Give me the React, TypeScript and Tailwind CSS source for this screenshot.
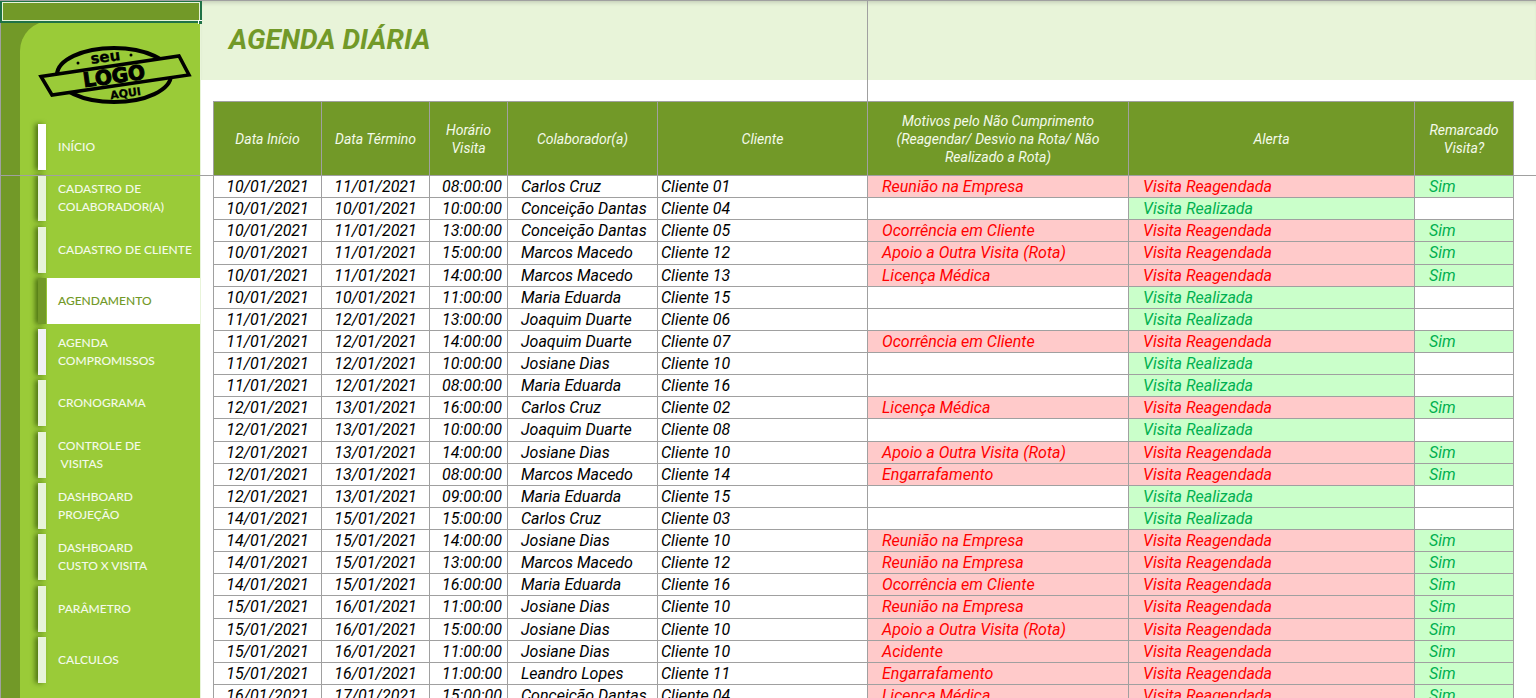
import React from "react";
import clsx from "clsx";

const menu = [
  { label: "INÍCIO", bar: "bg-white" },
  { label: "CADASTRO DE\nCOLABORADOR(A)", bar: "bg-[#e8f4d9]" },
  { label: "CADASTRO DE CLIENTE", bar: "bg-[#e8f4d9]" },
  { label: "AGENDAMENTO", bar: "bg-[#729928]", active: true },
  { label: "AGENDA\nCOMPROMISSOS", bar: "bg-[#f1f1f5]" },
  { label: "CRONOGRAMA", bar: "bg-[#e8f4d9]" },
  { label: "CONTROLE DE\n VISITAS", bar: "bg-[#e8f4d9]" },
  { label: "DASHBOARD\nPROJEÇÃO", bar: "bg-[#e8f4d9]" },
  { label: "DASHBOARD\nCUSTO X VISITA", bar: "bg-[#e8f4d9]" },
  { label: "PARÂMETRO", bar: "bg-[#e8f4d9]" },
  { label: "CALCULOS", bar: "bg-[#e8f4d9]" },
];

const columns = [
  { label: "Data Início", width: "w-[108px]" },
  { label: "Data Término", width: "w-[108px]" },
  { label: "Horário\nVisita", width: "w-[78px]" },
  { label: "Colaborador(a)", width: "w-[150px]" },
  { label: "Cliente", width: "w-[210px]" },
  {
    label:
      "Motivos pelo Não Cumprimento\n(Reagendar/ Desvio na Rota/ Não\nRealizado a Rota)",
    width: "w-[261px]",
  },
  { label: "Alerta", width: "w-[286px]" },
  { label: "Remarcado\nVisita?", width: "w-[99px]" },
];

// início, término, horário, colaborador, cliente, motivo (vazio = visita realizada)
const visits = [
  ["10/01/2021", "11/01/2021", "08:00:00", "Carlos Cruz", "Cliente 01", "Reunião na Empresa"],
  ["10/01/2021", "10/01/2021", "10:00:00", "Conceição Dantas", "Cliente 04", ""],
  ["10/01/2021", "11/01/2021", "13:00:00", "Conceição Dantas", "Cliente 05", "Ocorrência em Cliente"],
  ["10/01/2021", "11/01/2021", "15:00:00", "Marcos Macedo", "Cliente 12", "Apoio a Outra Visita (Rota)"],
  ["10/01/2021", "11/01/2021", "14:00:00", "Marcos Macedo", "Cliente 13", "Licença Médica"],
  ["10/01/2021", "10/01/2021", "11:00:00", "Maria Eduarda", "Cliente 15", ""],
  ["11/01/2021", "12/01/2021", "13:00:00", "Joaquim Duarte", "Cliente 06", ""],
  ["11/01/2021", "12/01/2021", "14:00:00", "Joaquim Duarte", "Cliente 07", "Ocorrência em Cliente"],
  ["11/01/2021", "12/01/2021", "10:00:00", "Josiane Dias", "Cliente 10", ""],
  ["11/01/2021", "12/01/2021", "08:00:00", "Maria Eduarda", "Cliente 16", ""],
  ["12/01/2021", "13/01/2021", "16:00:00", "Carlos Cruz", "Cliente 02", "Licença Médica"],
  ["12/01/2021", "13/01/2021", "10:00:00", "Joaquim Duarte", "Cliente 08", ""],
  ["12/01/2021", "13/01/2021", "14:00:00", "Josiane Dias", "Cliente 10", "Apoio a Outra Visita (Rota)"],
  ["12/01/2021", "13/01/2021", "08:00:00", "Marcos Macedo", "Cliente 14", "Engarrafamento"],
  ["12/01/2021", "13/01/2021", "09:00:00", "Maria Eduarda", "Cliente 15", ""],
  ["14/01/2021", "15/01/2021", "15:00:00", "Carlos Cruz", "Cliente 03", ""],
  ["14/01/2021", "15/01/2021", "14:00:00", "Josiane Dias", "Cliente 10", "Reunião na Empresa"],
  ["14/01/2021", "15/01/2021", "13:00:00", "Marcos Macedo", "Cliente 12", "Reunião na Empresa"],
  ["14/01/2021", "15/01/2021", "16:00:00", "Maria Eduarda", "Cliente 16", "Ocorrência em Cliente"],
  ["15/01/2021", "16/01/2021", "11:00:00", "Josiane Dias", "Cliente 10", "Reunião na Empresa"],
  ["15/01/2021", "16/01/2021", "15:00:00", "Josiane Dias", "Cliente 10", "Apoio a Outra Visita (Rota)"],
  ["15/01/2021", "16/01/2021", "11:00:00", "Josiane Dias", "Cliente 10", "Acidente"],
  ["15/01/2021", "16/01/2021", "11:00:00", "Leandro Lopes", "Cliente 11", "Engarrafamento"],
  ["16/01/2021", "17/01/2021", "15:00:00", "Conceição Dantas", "Cliente 04", "Licença Médica"],
];

function Logo() {
  return (
    <svg
      width="156"
      height="62"
      viewBox="0 0 156 62"
      className="ml-[17px] mt-[22px]"
      role="img"
      aria-label="Seu logo aqui"
    >
      <ellipse cx="77" cy="31" rx="57" ry="27" fill="none" stroke="#000" strokeWidth="4" />
      <path
        d="M4 32.5 L142 12 L152 31 L15 51 Z"
        fill="#9acb38"
        stroke="#000"
        strokeWidth="3.5"
      />
      <g
        fill="#000"
        stroke="#000"
        textAnchor="middle"
        className="font-['DejaVu_Sans'] font-bold"
      >
        <text x="69" y="18" fontSize="15" strokeWidth="0.3" transform="rotate(-8 69 18)">
          seu
        </text>
        <text x="78" y="39" fontSize="20" strokeWidth="1" transform="rotate(-8 78 39)">
          LOGO
        </text>
        <text x="89" y="53" fontSize="11" strokeWidth="0.3" transform="rotate(-8 89 53)">
          AQUI
        </text>
      </g>
      <circle cx="41" cy="19" r="1.5" />
      <circle cx="94" cy="11" r="1.5" />
    </svg>
  );
}

function Sidebar() {
  return (
    <aside className="w-[200px] shrink-0 border-l border-[#a0a0a0] bg-[#729928]">
      <div className="relative z-10 -ml-px h-[23px] w-[202px] border-2 border-[#1f7246] bg-[#729928] p-0">
        <div className="h-full border border-[#e8f4d9]"></div>
        <span className="absolute -bottom-[3px] -right-[2px] size-1 border-l border-t border-white bg-[#1f7246]"></span>
      </div>
      <div className="-mt-[2px] ml-[19px] h-full rounded-tl-[30px] bg-[#9acb38] pt-px">
        <Logo />
        <nav className="ml-[18px] mt-[18px] flex h-[559px] flex-col justify-between">
          {menu.map((item) => (
            <a
              key={item.label}
              href="#"
              className={clsx(
                "flex h-[46px] items-center font-[Lato,sans-serif] text-[12px] font-medium leading-[18px]",
                item.active ? "text-[#729928]" : "text-[#f4faea]"
              )}
            >
              <span
                className={clsx(
                  "h-full w-2 shrink-0 shadow-[-3px_0_5px_rgba(40,70,0,0.65)]",
                  item.bar
                )}
              ></span>
              <span
                className={clsx(
                  "ml-px flex h-full grow items-center whitespace-pre pl-[11px]",
                  item.active && "bg-white"
                )}
              >
                {item.label}
              </span>
            </a>
          ))}
        </nav>
      </div>
    </aside>
  );
}

export default function App() {
  return (
    <div className="relative flex h-screen overflow-hidden bg-white font-[Roboto,sans-serif]">
      <Sidebar />

      <main className="relative min-w-0 grow border-l border-[#e8f4d9]">
        <header className="h-20 bg-[#e8f4d9] pl-7 pt-5 shadow-[inset_0_5px_5px_-3px_rgba(0,0,0,0.2)]">
          <h1 className="text-[28px] font-bold italic leading-10 text-[#729928]">
            AGENDA DIÁRIA
          </h1>
        </header>

        {/* linha vertical do painel congelado */}
        <div className="absolute inset-x-0 top-0 flex h-[101px] pl-3 pr-[22px]">
          <div className="flex-[655] border-r border-[#a0a0a0]"></div>
          <div className="flex-[646]"></div>
        </div>

        <div className="pl-3 pr-[22px] pt-[21px]">
          <table className="h-[606px] w-full table-fixed border-collapse italic">
            <thead>
              <tr className="h-[74px] bg-[#729928] text-sm leading-[18px] text-[#f4faea]">
                {columns.map((col) => (
                  <th
                    key={col.label}
                    className={clsx(
                      "whitespace-pre border border-[#a0a0a0] p-0 text-center font-normal",
                      col.width
                    )}
                  >
                    {col.label}
                  </th>
                ))}
              </tr>
            </thead>
            <tbody className="whitespace-nowrap text-base leading-5 text-black [&_td]:border [&_td]:border-[#a0a0a0] [&_td]:pb-0 [&_td]:pt-px">
              {visits.map(([start, end, time, person, client, reason], i) => (
                <tr key={i} className="h-[22px]">
                  <td className="px-0 text-center">{start}</td>
                  <td className="px-0 text-center">{end}</td>
                  <td className="pr-[5px] text-right">{time}</td>
                  <td className="pl-[13px]">{person}</td>
                  <td className="pl-[3px]">{client}</td>
                  <td className={clsx("pl-[14px] text-[#ff0000]", reason && "bg-[#ffcaca]")}>
                    {reason}
                  </td>
                  <td
                    className={clsx(
                      "pl-[14px]",
                      reason ? "bg-[#ffcaca] text-[#ff0000]" : "bg-[#caffca] text-[#00b050]"
                    )}
                  >
                    {reason ? "Visita Reagendada" : "Visita Realizada"}
                  </td>
                  <td className={clsx("pl-[14px] text-[#00b050]", reason && "bg-[#caffca]")}>
                    {reason && "Sim"}
                  </td>
                </tr>
              ))}
            </tbody>
          </table>
        </div>
      </main>

      {/* linhas horizontais: topo da planilha e painel congelado */}
      <div className="absolute inset-x-0 top-0 z-20 h-px bg-[#a0a0a0]"></div>
      <div className="absolute inset-x-0 top-[175px] h-px bg-[#a0a0a0]"></div>
    </div>
  );
}
